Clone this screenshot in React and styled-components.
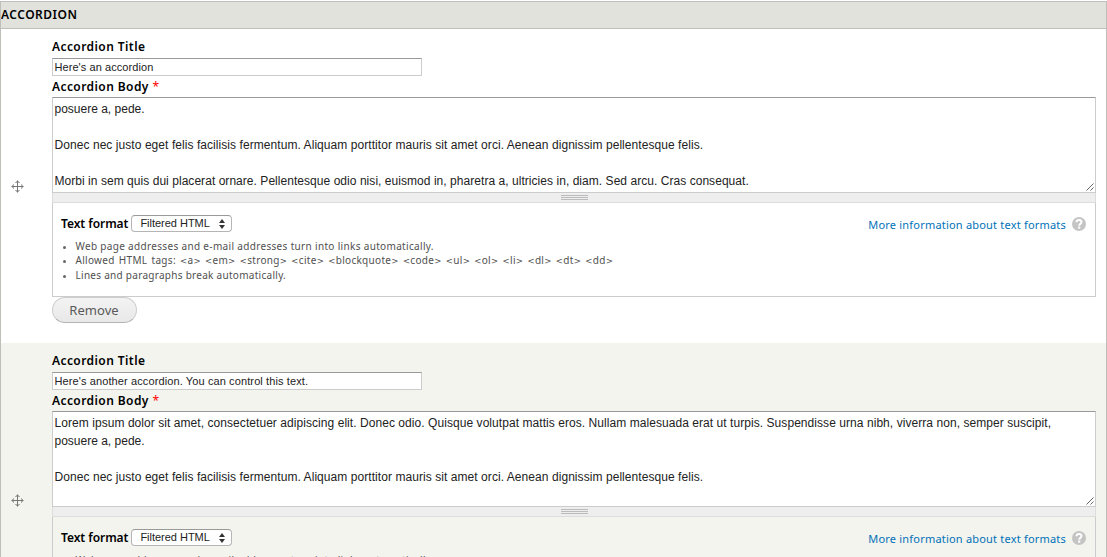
import React from "react";
import styled, { createGlobalStyle } from "styled-components";

const Global = createGlobalStyle`
  * { box-sizing: border-box; }
  html, body { margin: 0; height: 557px; overflow: hidden; background: #fff; }
  body { font-family: "Noto Sans", "Open Sans", sans-serif; color: #000; }
`;

const Table = styled.main`
  margin-top: 1px;
  width: 1107px;
  height: 556px;
  overflow: hidden;
  border: 1px solid #bebfb9;
  border-bottom: 0;
`;

const Header = styled.header`
  height: 27px;
  border-bottom: 1px solid #bebfb9;
  background: #e1e2dc;
  font-size: 12px;
  font-weight: 600;
  line-height: 26px;
  letter-spacing: 0.5px;
`;

const Row = styled.section`
  display: flex;
  height: 314px;
  background: ${(p) => (p.$even ? "#f3f4ee" : "#fff")};
`;

const Handle = styled.div`
  width: 51px;
  flex: none;
  display: flex;
  align-items: center;
  padding-left: 10px;
`;

const Fields = styled.div`
  width: 1044px;
  padding-top: 9px;
`;

const Label = styled.label`
  display: block;
  height: ${(p) => p.$h}px;
  font-size: 12px;
  font-weight: 600;
  line-height: 18px;
  letter-spacing: ${(p) => p.$ls ?? 0.42}px;
  white-space: nowrap;
`;

const Required = styled.span`
  color: #f00;
  font-weight: 400;
`;

const TextField = styled.div`
  width: 370px;
  height: 18px;
  border: 1px solid #ccc;
  border-top-color: #999;
  background: #fff;
  padding-left: 1.5px;
  margin-bottom: 2px;
  font: 11px/17px "Liberation Sans", Arial, sans-serif;
  letter-spacing: ${(p) => p.$ls}px;
  color: #222;
  white-space: nowrap;
`;

const Area = styled.div`
  position: relative;
  height: 96px;
  border: 1px solid #ccc;
  border-top-color: #999;
  background: #fff;
  padding: 2px 1.5px 0;
  color: #222;
  font: 12px/18px "Liberation Sans", Arial, sans-serif;
`;

const Line = styled.div`
  height: 18px;
  white-space: nowrap;
  letter-spacing: ${(p) => p.$ls || 0}px;
`;

const ResizeCorner = styled.svg`
  position: absolute;
  right: 1px;
  bottom: 1px;
`;

const Grippie = styled.div`
  height: 10px;
  border: 1px solid #ddd;
  border-top: 0;
  background: #eee;
  display: flex;
  justify-content: center;
  padding-top: 2px;
`;

const Format = styled.div`
  height: 94px;
  border: 1px solid #ccc;
  border-top: 0;
  padding: 12px 9px 0 8px;
`;

const FormatBar = styled.div`
  display: flex;
  align-items: center;
  height: 17px;
`;

const Select = styled.div`
  width: 101px;
  height: 17px;
  margin-left: 3px;
  padding: 0 6px 0 8px;
  border: 1px solid #b5b5b5;
  border-top-color: #999;
  border-radius: 4px;
  background: #fff;
  display: flex;
  align-items: center;
  justify-content: space-between;
  font: 11px/15px "Liberation Sans", Arial, sans-serif;
  letter-spacing: -0.02px;
  color: #222;
`;

const More = styled.a`
  margin-left: auto;
  display: flex;
  align-items: center;
  gap: 6px;
  color: #0071b8;
  font-size: 11px;
  line-height: 17px;
  padding-top: 1px;
  letter-spacing: 0.2px;
  white-space: nowrap;
`;

const Tips = styled.ul`
  list-style: none;
  margin: 7px 0 0;
  padding: 0;
  color: #505050;
`;

const Tip = styled.li`
  display: flex;
  align-items: center;
  height: ${(p) => p.$h}px;
  font-size: 10px;
  line-height: 14px;
  white-space: nowrap;
  letter-spacing: ${(p) => p.$ls}px;
  &::before {
    content: "";
    width: 3px;
    height: 3px;
    border-radius: 50%;
    background: #666;
    margin: 2px 9.5px 0 2px;
  }
`;

const TagText = styled.span`
  word-spacing: 1.3px;
`;

const Bracket = styled.span`
  font-family: "DejaVu Sans", sans-serif;
  font-size: 8.5px;
`;

const Remove = styled.button`
  display: block;
  width: 85px;
  height: 26px;
  padding: 0 1px 1px 0;
  border: 1px solid #cdcdcd;
  border-bottom-color: #b4b4b4;
  border-radius: 13px;
  background: linear-gradient(#f3f3f3, #e8e8e8);
  color: #5a5a5a;
  font: 13px/20px "Noto Sans", sans-serif;
  letter-spacing: 0.05px;
`;

const MoveIcon = () => (
  <svg width="13" height="13" viewBox="0 0 13 13" shapeRendering="crispEdges">
    <path d="M6 1h1v11H6zM1 6h11v1H1z" fill="#777" />
    <path d="M6 0h1v1H6zM5 1h3v1H5zM4 2h5v1H4zM6 12h1v1H6zM5 11h3v1H5zM4 10h5v1H4zM0 6h1v1H0zM1 5h1v3H1zM2 4h1v5H2zM12 6h1v1h-1zM11 5h1v3h-1zM10 4h1v5h-1z" fill="#777" fillOpacity="0.55" />
  </svg>
);

const GripLines = () => (
  <svg width="27" height="5" viewBox="0 0 27 5" shapeRendering="crispEdges">
    <path d="M0 0h27v1H0zM0 2h27v1H0zM0 4h27v1H0z" fill="#bbb" />
  </svg>
);

const HelpIcon = () => (
  <svg width="14" height="14" viewBox="0 0 14 14">
    <circle cx="7" cy="7" r="7" fill="#c4c4c4" />
    <path d="M4.500 5.200C4.600 3.600 5.600 2.900 7 2.900s2.500.8 2.500 2.100C9.500 6.700 7.200 6.700 7.200 8.700" fill="none" stroke="#fff" strokeWidth="2" />
    <path d="M6.100 9.600h2.200v2H6.100z" fill="#fff" />
  </svg>
);

const TAGS = ["a", "em", "strong", "cite", "blockquote", "code", "ul", "ol", "li", "dl", "dt", "dd"];

const Item = ({ even, title, titleSpacing, lines }) => (
  <Row $even={even}>
    <Handle><MoveIcon /></Handle>
    <Fields>
      <Label $h={20}>Accordion Title</Label>
      <TextField $ls={titleSpacing}>{title}</TextField>
      <Label $h={19}>Accordion Body <Required>*</Required></Label>
      <Area>
        {lines.map((l, i) => <Line key={i} $ls={l[1]}>{l[0]}</Line>)}
        <ResizeCorner width="8" height="8" viewBox="0 0 8 8">
          <path d="M0.500 7.500l7-7M4.500 7.500l3-3" stroke="#555" strokeWidth="0.9" fill="none" />
        </ResizeCorner>
      </Area>
      <Grippie><GripLines /></Grippie>
      <Format>
        <FormatBar>
          <Label as="span" $h={18} $ls={-0.05}>Text format</Label>
          <Select>
            Filtered HTML
            <svg width="6" height="10" viewBox="0 0 6 10"><path d="M0 4L3 0l3 4zM0 6l3 4 3-4z" fill="#333" /></svg>
          </Select>
          <More>More information about text formats<HelpIcon /></More>
        </FormatBar>
        <Tips>
          <Tip $h={14} $ls={0.33}>Web page addresses and e-mail addresses turn into links automatically.</Tip>
          <Tip $h={15} $ls={0.3}>
            <TagText>
              Allowed HTML tags:
              {TAGS.map((t) => (
                <React.Fragment key={t}> <Bracket>&lt;</Bracket>{t}<Bracket>&gt;</Bracket></React.Fragment>
              ))}
            </TagText>
          </Tip>
          <Tip $h={14} $ls={0.28}>Lines and paragraphs break automatically.</Tip>
        </Tips>
      </Format>
      <Remove>Remove</Remove>
    </Fields>
  </Row>
);

const donec = "Donec nec justo eget felis facilisis fermentum. Aliquam porttitor mauris sit amet orci. Aenean dignissim pellentesque felis.";

export default function App() {
  return (
    <>
      <Global />
      <Table>
        <Header>ACCORDION</Header>
        <Item
          title="Here's an accordion"
          titleSpacing={0.07}
          lines={[
            ["posuere a, pede."],
            [""],
            [donec, 0.062],
            [""],
            ["Morbi in sem quis dui placerat ornare. Pellentesque odio nisi, euismod in, pharetra a, ultricies in, diam. Sed arcu. Cras consequat.", 0.045],
          ]}
        />
        <Item
          even
          title="Here's another accordion. You can control this text."
          titleSpacing={0.11}
          lines={[
            ["Lorem ipsum dolor sit amet, consectetuer adipiscing elit. Donec odio. Quisque volutpat mattis eros. Nullam malesuada erat ut turpis. Suspendisse urna nibh, viverra non, semper suscipit,", 0.058],
            ["posuere a, pede."],
            [""],
            [donec, 0.062],
          ]}
        />
      </Table>
    </>
  );
}
